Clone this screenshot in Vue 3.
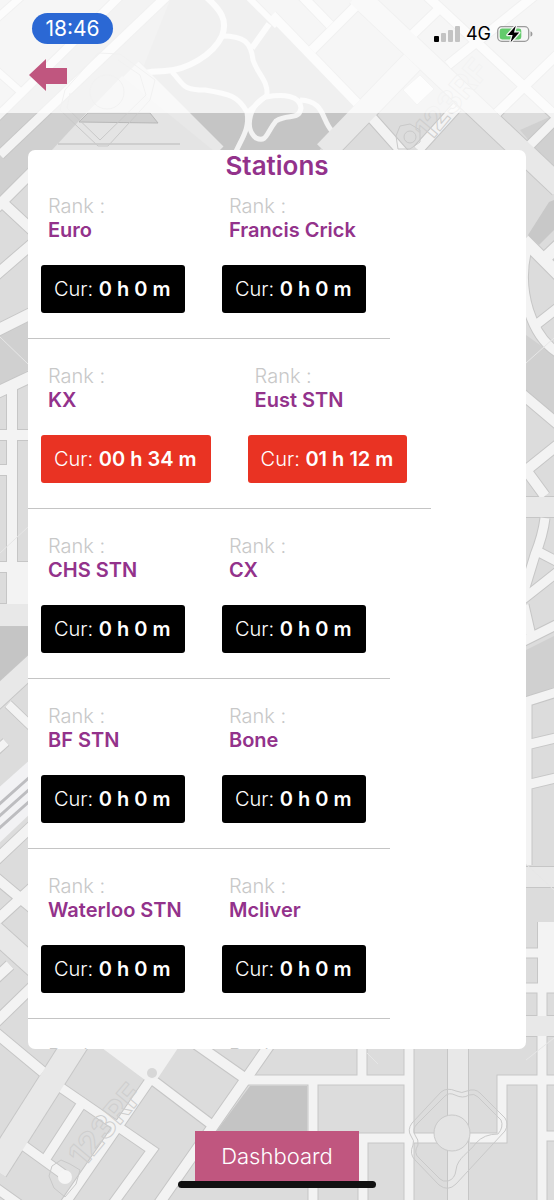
<script setup>
const zero = '0 h 0 m'
const rows = [
  [{ name: 'Euro', time: zero }, { name: 'Francis Crick', time: zero }],
  [{ name: 'KX', time: '00 h 34 m', busy: true }, { name: 'Eust STN', time: '01 h 12 m', busy: true }],
  [{ name: 'CHS STN', time: zero }, { name: 'CX', time: zero }],
  [{ name: 'BF STN', time: zero }, { name: 'Bone', time: zero }],
  [{ name: 'Waterloo STN', time: zero }, { name: 'Mcliver', time: zero }],
  [{}, {}],
]

// Darker city blocks and parks under the roads
const blocks = [
  { d: 'M120 0H210L140 75L0 205V110Z', c: '#d0d0d0' },
  { d: 'M0 110L115 0H163L8 147L0 150Z', c: '#d0d0d0' },
  { d: 'M170 0H255L357 103L318 152H210L140 75Z', c: '#c5c5c5' },
  { d: 'M0 335L28 322V370L0 387Z', c: '#d0d0d0' },
  { d: 'M0 626H28V662L0 686Z', c: '#c5c5c5' },
  { d: 'M549 202L528 235L539 245L554 230V200Z', c: '#c8c8c8' },
  { d: 'M526 335L554 355V415L526 395Z', c: '#d0d0d0' },
  { d: 'M526 650L554 636V687L526 699Z', c: '#d0d0d0' },
  { d: 'M520 130L554 115V170Z', c: '#d0d0d0' },
  { d: 'M250 1086H307V1140H210Z', c: '#c4c4c4' },
]

const avenues = [
  { d: 'M130 70L215 155', w: 24 },
  { d: 'M357 -5L560 187', w: 21 },
  { d: 'M412 62L325 152', w: 22 },
  { d: 'M-5 615H28', w: 22 },
  { d: 'M40 658L-10 704', w: 20 },
  { d: 'M-10 927L40 972', w: 20 },
  { d: 'M520 507H560', w: 20 },
  { d: 'M520 877H560', w: 20 },
  { d: 'M520 1026H560', w: 20 },
  { d: 'M84 1030L-5 1170', w: 25 },
  { d: 'M458 1040V1205', w: 20 },
]

const streets = [
  { d: 'M167 -4L0 155', w: 9 },
  { d: 'M120 -4L-4 118', w: 8 },
  { d: 'M-4 70L22 93M-4 19L22 -4', w: 7 },
  { d: 'M205 -4C221 10 228 20 222 36C213 55 187 70 165 71C155 72 149 71 143 74', w: 6 },
  { d: 'M172 72C184 84 181 90 205 90C230 94 238 96 247 112C250 130 241 139 235 154', w: 5 },
  { d: 'M222 36C244 36 251 42 253 60C258 75 268 80 267 95L248 112', w: 5 },
  { d: 'M247 -4L277 26M269 24L252 48', w: 6 },
  { d: 'M266 97C283 94 300 95 301 108C299 121 288 113 276 121C266 133 267 143 256 138C243 128 251 102 266 97M300 100C325 101 321 119 332 131', w: 5 },
  { d: 'M272 15L357 103', w: 9 },
  { d: 'M302 -4L330 25M357 5L312 50', w: 9 },
  { d: 'M427 -4L560 120M412 35L440 8M448 65L534 -4', w: 9 },
  { d: 'M497 113L560 52M527 148L560 115', w: 9 },
  { d: 'M372 118L404 154M457 107L418 150', w: 10 },
  { d: 'M32 172L-4 208M4 204L32 230M32 244L-4 275', w: 10 },
  { d: 'M-4 331L32 313M-4 393L32 376', w: 11 },
  { d: 'M12 388V604M-4 435H32M-4 470H12M-4 567H32', w: 10 },
  { d: 'M20 567V604', w: 22 },
  { d: 'M8 704L34 729M-4 751L6 742', w: 8 },
  { d: 'M32 826L-4 860M-4 878L32 908M32 888L-4 921', w: 10 },
  { d: 'M10 965L-4 978M32 987L-4 1022M-4 1033L43 1072', w: 10 },
  { d: 'M524 240L560 276M560 244L540 263', w: 12 },
  { d: 'M528 245C515 290 532 338 560 354M532 328L560 306', w: 9 },
  { d: 'M522 394L560 426M524 472L560 443M526 470L545 496', w: 10 },
  { d: 'M545 518Q543 535 535 555L520 604M535 550L560 563M522 600L560 570', w: 9 },
  { d: 'M524 605L532 640M522 642L560 623M522 703L560 691M522 746L560 737M522 786L560 777M527 700V865', w: 9 },
  { d: 'M520 953H540M520 988H560M542 988V1205', w: 9 },
  { d: 'M547 922V990', w: 18 },
  { d: 'M60 1087L152 1150L112 1205M82 1103L45 1160M20 1143L67 1177M-4 1188L20 1205', w: 9 },
  { d: 'M150 1080L64 1205M150 1078L212 1125', w: 9 },
  { d: 'M196 1044L246 1079M273 1040L158 1205', w: 10 },
  { d: 'M248 1080H412M362 1044V1080M409 1044V1205M313 1080V1205', w: 9 },
  { d: 'M363 1205V1138H447M470 1138H502V1080H560M542 1136H560', w: 9 },
]
</script>

<template>
  <div class="screen">
    <svg class="map" viewBox="0 0 554 1200" preserveAspectRatio="xMidYMid slice" aria-hidden="true">
      <rect width="554" height="1200" fill="#dcdcdc" />
      <path v-for="(b, i) in blocks" :key="'b' + i" :d="b.d" :fill="b.c" />
      <g fill="none" stroke-linejoin="miter">
        <path v-for="(r, i) in avenues" :key="'ae' + i" :d="r.d" stroke="#c6c6c6" :stroke-width="r.w + 2" />
        <path v-for="(r, i) in streets" :key="'se' + i" :d="r.d" stroke="#c6c6c6" :stroke-width="r.w + 2" />
        <path v-for="(r, i) in streets" :key="'sf' + i" :d="r.d" stroke="#f3f3f3" :stroke-width="r.w" />
        <path v-for="(r, i) in avenues" :key="'af' + i" :d="r.d" stroke="#e8e8e8" :stroke-width="r.w" />
      </g>
      <path d="M32 758L-4 790V846L32 812Z" fill="#f2f2f4" />
      <path d="M32 775L-4 807M32 787L-4 819M32 799L-4 831" stroke="#bdbdc0" stroke-width="3" />
      <path d="M98 1045H180L158 1078L145 1080Z" fill="#f1f1f1" />
      <path d="M403 90L420 75L434 89L417 105Z" fill="#f6f6f6" stroke="#d4d4d4" />
      <path d="M52 150L78 122L122 76L215 152Z" fill="#e4e4e4" />
      <path d="M79 122L88 113H150L158 123ZM58 144H180" fill="#d0d0d0" stroke="#b8b8b8" />
      <g fill="none" stroke="#c9c9c9" stroke-width="1">
        <circle cx="452" cy="1133" r="18" fill="#e4e4e4" />
        <path d="M441 1092Q447 1087 456 1091Q462 1094 467 1091Q475 1088 480 1093L505 1118Q509 1124 505 1131L456 1184Q448 1192 439 1185L415 1160Q409 1154 413 1145Q415 1141 411 1136Q407 1130 412 1123Z" />
        <path d="M445 1096Q449 1092 455 1095Q463 1099 469 1095Q474 1093 478 1097L501 1120Q504 1127 498 1134Q484 1134 476 1143C470 1152 457 1158 456 1170Q455 1179 448 1181Q443 1182 440 1179L419 1158Q413 1153 418 1145Q419 1140 415 1135Q412 1129 417 1124Z" />
        <path d="M65 90L60 110L98 146H108L150 100L155 80L135 65L120 54L98 53Z" />
        <path d="M70 93L67 108L100 140L146 95L140 75L118 60" />
        <circle cx="107" cy="92" r="17" />
        <path d="M61 1160L70 1164L80 1170L76 1184L65 1197L54 1188L49 1176L52 1166Z" />
        <path d="M396 136L400 126L410 124L420 130V142L410 149H398Z" />
        <circle cx="410" cy="137" r="6" />
      </g>
      <circle cx="65" cy="1177" r="7" fill="#f5f5f5" />
      <circle cx="152" cy="1073" r="5" fill="#d7d7d7" />
      <g class="mark" fill="none" stroke="#cecece" stroke-width="1">
        <text transform="translate(84 1168) rotate(-50)">123RF</text>
        <text transform="translate(430 143) rotate(-50)">123RF</text>
      </g>
      <path d="M0 337L28 364M0 553L28 527M526 363L554 338M526 864L554 890M526 1060L554 1038M367 1053L378 1064" stroke="#e6e6e6" />
    </svg>

    <header class="top">
      <div class="status">
        <span class="clock">18:46</span>
        <div class="signals">
          <svg width="26" height="16" viewBox="0 0 26 16" role="img" aria-label="Signal strength">
            <rect x="0" y="10" width="5" height="6" rx="1" fill="#000" />
            <rect x="7" y="7" width="5" height="9" rx="1" fill="#c3c3c3" />
            <rect x="14" y="4" width="5" height="12" rx="1" fill="#c3c3c3" />
            <rect x="21" y="0" width="5" height="16" rx="1" fill="#c3c3c3" />
          </svg>
          <span class="network">4G</span>
          <svg width="36" height="18" viewBox="0 0 36 18" role="img" aria-label="Battery charging">
            <rect x="0.7" y="1.7" width="31" height="14.6" rx="4" fill="none" stroke="#9b9b9b" stroke-width="1.3" />
            <path d="M33.5 6.2Q35.5 7 35.5 9Q35.5 11 33.5 11.8Z" fill="#9b9b9b" />
            <rect x="2.7" y="3.6" width="21.6" height="10.8" rx="2.4" fill="#63cb6c" />
            <path d="M18.8 0.8L10.5 10H15.6L13.6 17.2L22.2 7.6H17Z" fill="#000" stroke="#f6f6f6" stroke-width="2.6" stroke-linejoin="round" paint-order="stroke" />
          </svg>
        </div>
      </div>
      <button class="back" type="button" aria-label="Back">
        <svg width="38" height="32" viewBox="0 0 38 32"><path d="M0 16L17 0V9H38V25H17V32Z" fill="#c0567f" /></svg>
      </button>
    </header>

    <main class="card">
      <h1>Stations</h1>
      <div v-for="(row, i) in rows" :key="i" class="row">
        <section v-for="(s, j) in row" :key="j" class="station">
          <p class="rank">Rank :</p>
          <h2 v-if="s.name">{{ s.name }}</h2>
          <p v-if="s.time" class="time" :class="{ busy: s.busy }">Cur: <strong>{{ s.time }}</strong></p>
        </section>
      </div>
    </main>

    <footer class="bottom">
      <button class="dashboard" type="button">Dashboard</button>
      <div class="home"></div>
    </footer>
  </div>
</template>

<style>
body {
  margin: 0;
}
</style>

<style scoped>
.screen {
  position: relative;
  display: flex;
  flex-direction: column;
  height: 100vh;
  overflow: hidden;
  font-family: Inter, "Liberation Sans", sans-serif;
  color: #000;
}
.map {
  position: absolute;
  inset: 0;
  width: 100%;
  height: 100%;
}
.mark {
  font: 700 32px Inter, sans-serif;
}
.top {
  position: relative;
  box-sizing: border-box;
  height: 113px;
  padding: 13px 21px 0 29px;
  background: rgba(255, 255, 255, 0.74);
}
.status {
  display: flex;
  justify-content: space-between;
  align-items: center;
  height: 31px;
}
.clock {
  margin-left: 3px;
  width: 81px;
  border-radius: 16px;
  background: #2b68d4;
  color: #fff;
  font-size: 21px;
  line-height: 31px;
  text-align: center;
}
.signals {
  display: flex;
  align-items: center;
  gap: 6px;
  padding-top: 10px;
}
.network {
  font-size: 18px;
  line-height: 20px;
}
.back {
  display: block;
  margin-top: 15px;
  padding: 0;
  border: 0;
  background: none;
}
.back svg {
  display: block;
}
.card {
  position: relative;
  flex: 1;
  min-height: 0;
  margin: 37px 28px 82px;
  overflow: hidden;
  border-radius: 7px;
  background: #fff;
}
h1 {
  margin: 0;
  font-size: 26px;
  font-weight: 600;
  line-height: 32px;
  text-align: center;
  color: #93328b;
}
.row {
  display: flex;
  box-sizing: border-box;
  width: max-content;
  height: 170px;
  padding-top: 25px;
  border-bottom: 1px solid #c4c4c4;
}
.row:first-of-type {
  height: 157px;
  padding-top: 12px;
}
.station {
  min-width: 144px;
  padding: 0 24px 0 13px;
}
.rank,
h2 {
  margin: 0 0 0 7px;
  font-size: 20px;
  line-height: 24px;
}
.rank {
  font-weight: 300;
  color: #c8c8c8;
}
h2 {
  font-weight: 600;
  color: #93328b;
}
.time {
  box-sizing: border-box;
  min-width: 144px;
  margin: 23px 0 0;
  padding: 0 14px 0 13px;
  border-radius: 3px;
  background: #000;
  color: #fff;
  font-size: 20px;
  font-weight: 300;
  line-height: 48px;
  white-space: nowrap;
}
.time strong {
  font-weight: 600;
}
.time.busy {
  background: #e93323;
}
.bottom {
  position: relative;
  display: flex;
  flex-direction: column;
  align-items: center;
  padding-bottom: 12px;
}
.dashboard {
  height: 50px;
  padding: 0 26px;
  border: 0;
  background: #c0567f;
  color: #fff;
  font-family: inherit;
  font-size: 22px;
  font-weight: 300;
}
.home {
  width: 198px;
  height: 7px;
  border-radius: 4px;
  background: #111;
}
</style>
